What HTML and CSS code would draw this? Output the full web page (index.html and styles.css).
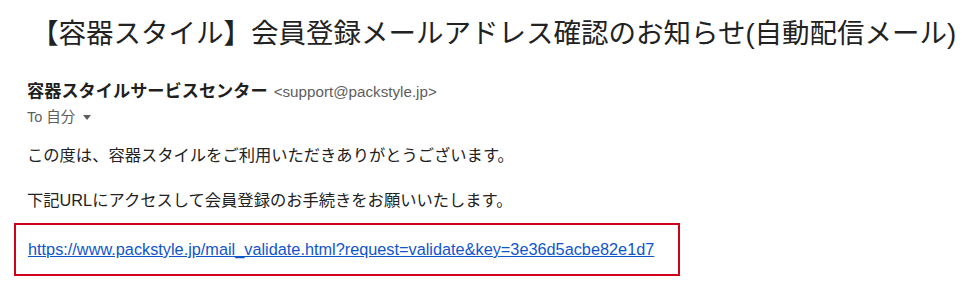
FILE: index.html
```html
<!DOCTYPE html>
<html lang="ja">
<head>
<meta charset="utf-8">
<link rel="stylesheet" href="styles.css">
</head>
<body>
<div class="page">
  <h1 class="subject">【容器スタイル】会員登録メールアドレス確認のお知らせ(自動配信メール)</h1>
  <div class="mail">
    <div class="from"><span class="name">容器スタイルサービスセンター</span> <span class="addr">&lt;support@packstyle.jp&gt;</span></div>
    <div class="to">To 自分 <span class="caret"></span></div>
    <div class="body">
      <p class="line">この度は、容器スタイルをご利用いただきありがとうございます。</p>
      <p class="line">下記URLにアクセスして会員登録のお手続きをお願いいたします。</p>
      <div class="linkbox"><a class="link" href="#">https://www.packstyle.jp/mail_validate.html?request=validate&amp;key=3e36d5acbe82e1d7</a></div>
    </div>
  </div>
</div>
</body>
</html>
```
FILE: styles.css
```css
html, body {
  margin: 0;
  padding: 0;
  background: #ffffff;
}
body {
  font-family: "Liberation Sans", "Noto Sans CJK JP", sans-serif;
  color: #222222;
}
.page {
  width: 980px;
  height: 300px;
  overflow: hidden;
}
.subject {
  margin: 0;
  padding: 14px 0 0 31px;
  font-size: 27.5px;
  font-weight: 400;
  line-height: 40px;
  color: #222222;
  white-space: nowrap;
}
.mail {
  padding: 25px 0 0 27px;
}
.from {
  display: flex;
  align-items: baseline;
  gap: 6px;
  line-height: 24px;
}
.name {
  font-size: 17.2px;
  font-weight: 700;
  color: #1f1f1f;
}
.addr {
  font-size: 15.2px;
  color: #5e5e5e;
}
.to {
  font-size: 14.5px;
  color: #5e5e5e;
  line-height: 20px;
  margin-top: 3px;
  display: flex;
  align-items: center;
  gap: 4px;
}
.caret {
  display: inline-block;
  width: 0;
  height: 0;
  margin-left: 4px;
  border-left: 4.5px solid transparent;
  border-right: 4.5px solid transparent;
  border-top: 5px solid #5e5e5e;
}
.body {
  margin-top: 17px;
}
.line {
  margin: 0 0 23px;
  font-size: 16.3px;
  line-height: 22px;
  color: #222222;
}
.line + .line {
  margin-bottom: 12px;
}
.linkbox {
  margin: 0 0 0 -13px;
  width: 650px;
  height: 49px;
  border: 2px solid #d0021b;
  display: flex;
  align-items: center;
  padding-left: 12px;
  box-sizing: content-box;
}
.link {
  font-size: 16.3px;
  color: #1155cc;
  text-decoration: underline;
}
```
